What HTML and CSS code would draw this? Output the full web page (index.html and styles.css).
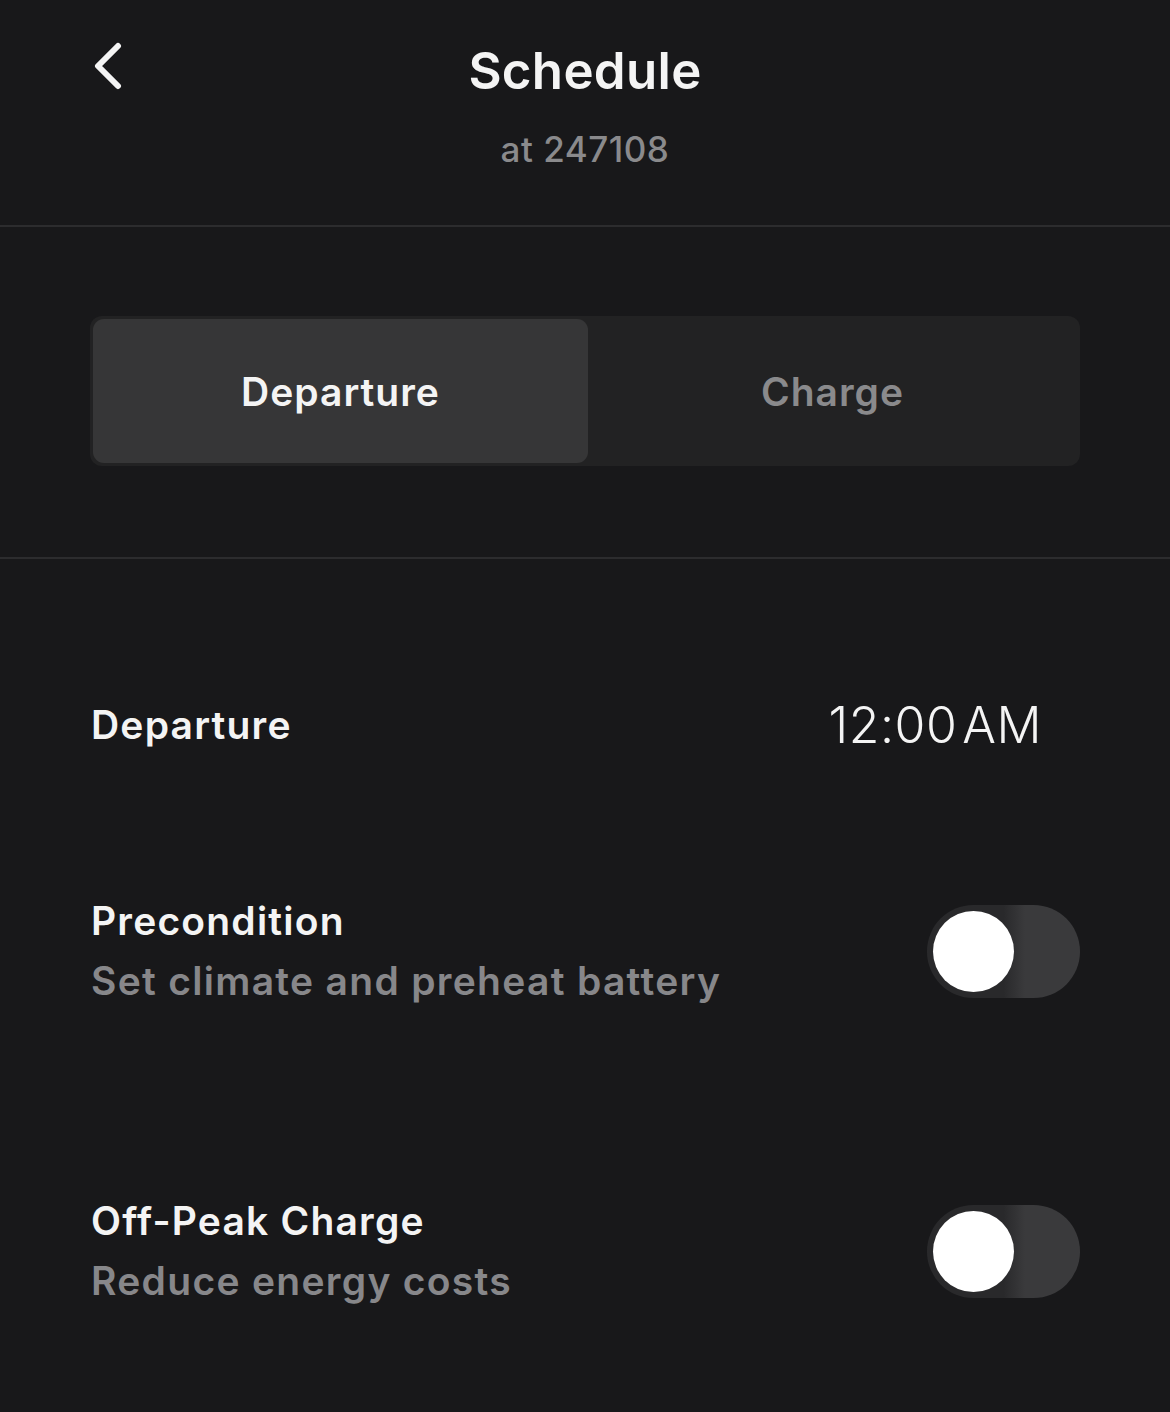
FILE: index.html
```html
<html>
  <head>
    <link rel="stylesheet" href="styles.css">
  </head>
  <body>
    <div class="screen">
      <div class="header">
        <button class="back-btn" aria-label="Back">
          <svg width="40" height="52" viewBox="0 0 40 52">
            <polyline points="26,4 6,24 26,44" fill="none" stroke="#f4f4f4" stroke-width="6" stroke-linecap="round" stroke-linejoin="round"/>
          </svg>
        </button>
        <div class="title">Schedule</div>
        <div class="subtitle">at 247108</div>
      </div>

      <div class="tabs-section">
        <div class="segmented">
          <div class="segment selected">Departure</div>
          <div class="segment">Charge</div>
        </div>
      </div>

      <div class="settings">
        <div class="row row-departure">
          <div class="row-title">Departure</div>
          <div class="time">12:00&#8202;AM</div>
        </div>

        <div class="row row-precondition">
          <div class="row-text">
            <div class="row-title">Precondition</div>
            <div class="row-sub">Set climate and preheat battery</div>
          </div>
          <div class="toggle"><span class="knob"></span></div>
        </div>

        <div class="row row-offpeak">
          <div class="row-text">
            <div class="row-title">Off-Peak Charge</div>
            <div class="row-sub">Reduce energy costs</div>
          </div>
          <div class="toggle"><span class="knob"></span></div>
        </div>
      </div>
    </div>
  </body>
</html>
```

FILE: styles.css
```css
body {
  margin: 0;
  background-color: #18181a;
  color: #f4f4f4;
  font-family: Inter, "Noto Sans", sans-serif;
}

.screen {
  width: 1170px;
  min-height: 1412px;
}

.header {
  position: relative;
  height: 227px;
  border-bottom: 2px solid #2c2c2e;
  text-align: center;
  box-sizing: border-box;
  padding-top: 39px;
}

.back-btn {
  position: absolute;
  left: 92px;
  top: 42px;
  background: none;
  border: none;
  padding: 0;
  cursor: pointer;
}

.title {
  font-size: 51px;
  font-weight: 600;
  line-height: 64px;
  letter-spacing: 0.3px;
}

.subtitle {
  margin-top: 24px;
  font-size: 35px;
  font-weight: 500;
  line-height: 44px;
  color: #8a8a8c;
  letter-spacing: 0.5px;
}

.tabs-section {
  padding: 89px 90px 91px;
  border-bottom: 2px solid #2c2c2e;
}

.segmented {
  display: flex;
  height: 150px;
  padding: 3px;
  box-sizing: border-box;
  background: #222223;
  border-radius: 12px;
}

.segment {
  flex: 1;
  display: flex;
  align-items: center;
  justify-content: center;
  border-radius: 11px;
  font-size: 39px;
  font-weight: 600;
  letter-spacing: 1px;
  color: #8a8a8c;
}

.segment.selected {
  flex: 0 0 495px;
  background: #363637;
  color: #f4f4f4;
}

.settings {
  padding: 116px 90px 0 91px;
}

.row {
  display: flex;
  align-items: center;
  justify-content: space-between;
  height: 100px;
}

.row-precondition {
  margin-top: 126px;
}

.row-offpeak {
  margin-top: 200px;
}

.row-title {
  font-size: 39px;
  font-weight: 600;
  line-height: 50px;
  letter-spacing: 1.2px;
}

.row-sub {
  margin-top: 10px;
  font-size: 39px;
  font-weight: 600;
  line-height: 50px;
  letter-spacing: 1.3px;
  color: #87878a;
}

.time {
  margin-right: 38px;
  font-size: 50px;
  font-weight: 300;
  letter-spacing: 0.5px;
}

.toggle {
  position: relative;
  width: 153px;
  height: 93px;
  border-radius: 47px;
  background: linear-gradient(to right, #29292b 0%, #29292b 50%, #3a3a3c 64%, #3a3a3c 100%);
}

.knob {
  position: absolute;
  left: 6px;
  top: 6px;
  width: 81px;
  height: 81px;
  border-radius: 50%;
  background: #ffffff;
}
```
